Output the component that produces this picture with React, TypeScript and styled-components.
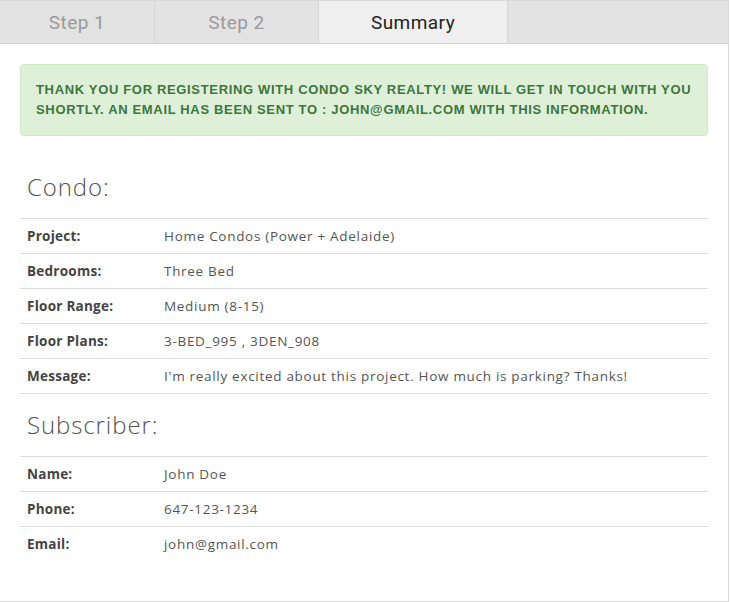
import { Fragment } from 'react';
import { createGlobalStyle, styled } from 'styled-components';

const GlobalStyle = createGlobalStyle`
  html, body {
    margin: 0;
    padding: 0;
    background: #fff;
  }
  body {
    font-family: "Open Sans", "DejaVu Sans", sans-serif;
  }
`;

const Panel = styled.div`
  width: 729px;
  height: 602px;
  box-sizing: border-box;
  border: 1px solid #d9d9d9;
  border-left: none;
  background: #fff;
`;

const TabBar = styled.nav`
  display: flex;
  height: 42px;
  background: #e3e3e3;
  border-bottom: 1px solid #d3d3d3;
`;

const Tab = styled.div<{ $active?: boolean; $width: number }>`
  display: flex;
  align-items: center;
  justify-content: center;
  box-sizing: border-box;
  width: ${(p) => p.$width}px;
  border-right: 1px solid #d6d6d6;
  background: ${(p) => (p.$active ? '#f0f0f0' : 'transparent')};
  color: ${(p) => (p.$active ? '#222' : '#9a9a9a')};
  font-family: Roboto, "Liberation Sans", sans-serif;
  font-size: 19px;
  letter-spacing: 0.45px;
`;

const Body = styled.main`
  padding: 20px 20px 0 20px;
`;

const Alert = styled.div`
  background: #dff0d8;
  border: 1px solid #d0e9c6;
  border-radius: 4px;
  padding: 15px 15px;
  color: #3c763d;
  font-family: "Liberation Sans", Arial, sans-serif;
  font-weight: 700;
  font-size: 13px;
  letter-spacing: 0.66px;
  line-height: 20px;
  text-transform: uppercase;
  margin-bottom: 36px;
`;

const Heading = styled.h3`
  margin: 0 0 16px 7px;
  font-size: 24px;
  line-height: 30px;
  font-weight: 300;
  color: #555;
  letter-spacing: 0.9px;
`;

const Table = styled.div<{ $closed?: boolean }>`
  display: grid;
  grid-template-columns: 144px 1fr;
  border-bottom: ${(p) => (p.$closed ? '1px solid #ddd' : 'none')};
  margin-bottom: 16px;
`;

const Label = styled.div`
  border-top: 1px solid #ddd;
  height: 34px;
  padding-left: 7px;
  display: flex;
  align-items: center;
  font-size: 13.5px;
  font-weight: 700;
  letter-spacing: 0.25px;
  color: #444;
`;

const Value = styled.div`
  border-top: 1px solid #ddd;
  height: 34px;
  display: flex;
  align-items: center;
  font-size: 13.5px;
  color: #555;
  letter-spacing: 0.7px;
`;

type Row = [string, string];

const condo: Row[] = [
  ['Project:', 'Home Condos (Power + Adelaide)'],
  ['Bedrooms:', 'Three Bed'],
  ['Floor Range:', 'Medium (8-15)'],
  ['Floor Plans:', '3-BED_995 , 3DEN_908'],
  ['Message:', "I'm really excited about this project. How much is parking? Thanks!"],
];

const subscriber: Row[] = [
  ['Name:', 'John Doe'],
  ['Phone:', '647-123-1234'],
  ['Email:', 'john@gmail.com'],
];

function DetailTable({ rows, closed }: { rows: Row[]; closed?: boolean }) {
  return (
    <Table $closed={closed}>
      {rows.map(([label, value]) => (
        <Fragment key={label}>
          <Label>{label}</Label>
          <Value>{value}</Value>
        </Fragment>
      ))}
    </Table>
  );
}

export default function App() {
  return (
    <>
      <GlobalStyle />
      <Panel>
        <TabBar>
          <Tab $width={155}>Step 1</Tab>
          <Tab $width={164}>Step 2</Tab>
          <Tab $width={189} $active>
            Summary
          </Tab>
        </TabBar>
        <Body>
          <Alert>
            Thank you for registering with Condo Sky Realty! We will get in touch with you shortly.
            An email has been sent to : john@gmail.com with this information.
          </Alert>
          <Heading>Condo:</Heading>
          <DetailTable rows={condo} closed />
          <Heading>Subscriber:</Heading>
          <DetailTable rows={subscriber} />
        </Body>
      </Panel>
    </>
  );
}
